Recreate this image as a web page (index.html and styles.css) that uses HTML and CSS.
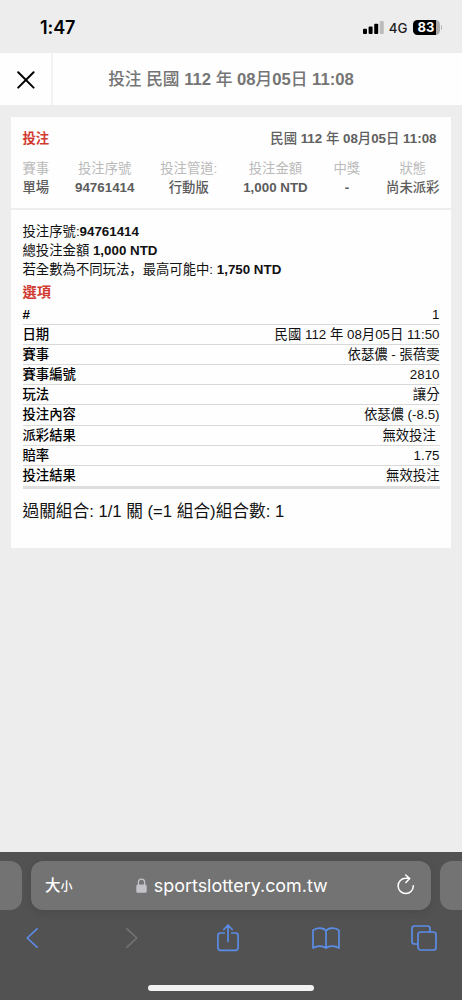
FILE: index.html
```html
<!DOCTYPE html>
<html lang="zh-Hant">
<head>
<meta charset="utf-8">
<title>投注</title>
<link rel="stylesheet" href="styles.css">
</head>
<body>
<div class="status">
  <span class="clock">1:47</span>
  <div class="indicators">
    <svg class="signal" width="21" height="13" viewBox="0 0 21 13"><rect x="0" y="7.8" width="4" height="5.2" rx="1"/><rect x="5.6" y="5.6" width="4" height="7.4" rx="1"/><rect x="11.2" y="2.8" width="4" height="10.2" rx="1"/><rect x="16.8" y="0" width="4" height="13" rx="1" fill="#bcbcbc"/></svg>
    <span class="network">4G</span>
    <div class="battery"><span class="level">83</span></div>
    <span class="cap"></span>
  </div>
</div>
<header class="titlebar">
  <button class="close"><svg width="18" height="18" viewBox="0 0 18 18" fill="none" stroke="#000" stroke-width="2" stroke-linecap="round"><path d="M1.2 1.2 16.6 16.6M16.6 1.2 1.2 16.6"/></svg></button>
  <h1 class="title">投注 民國 <b>112</b> 年 <b>08</b>月<b>05</b>日 <b>11:08</b></h1>
</header>
<main class="content">
  <article class="card">
    <section class="overview">
      <div class="overview-head">
        <span class="red">投注</span>
        <span class="date">民國 <b>112</b> 年 <b>08</b>月<b>05</b>日 <b>11:08</b></span>
      </div>
      <dl class="facts">
        <div><dt>賽事</dt><dd>單場</dd></div>
        <div><dt>投注序號</dt><dd><b>94761414</b></dd></div>
        <div><dt>投注管道:</dt><dd>行動版</dd></div>
        <div><dt>投注金額</dt><dd><b>1,000 NTD</b></dd></div>
        <div><dt>中獎</dt><dd><b>-</b></dd></div>
        <div><dt>狀態</dt><dd>尚未派彩</dd></div>
      </dl>
    </section>
    <section class="details">
      <p class="line">投注序號:<b>94761414</b></p>
      <p class="line">總投注金額 <b>1,000 NTD</b></p>
      <p class="line">若全數為不同玩法<span class="comma" lang="zh-Hans">，</span>最高可能中: <b>1,750 NTD</b></p>
      <h2 class="red options">選項</h2>
      <div class="rows">
        <div class="row"><span class="label"><b>#</b></span><span>1</span></div>
        <div class="row"><span class="label">日期</span><span>民國 112 年 08月05日 11:50</span></div>
        <div class="row"><span class="label">賽事</span><span>依瑟儂 - 張蓓雯</span></div>
        <div class="row"><span class="label">賽事編號</span><span>2810</span></div>
        <div class="row"><span class="label">玩法</span><span>讓分</span></div>
        <div class="row"><span class="label">投注內容</span><span>依瑟儂 (-8.5)</span></div>
        <div class="row"><span class="label">派彩結果</span><span>無效投注&nbsp;</span></div>
        <div class="row"><span class="label">賠率</span><span>1.75</span></div>
        <div class="row"><span class="label">投注結果</span><span>無效投注</span></div>
      </div>
      <p class="combo">過關組合: 1/1 關 (=1 組合)組合數: 1</p>
    </section>
  </article>
</main>
<footer class="browser">
  <div class="tabs">
    <div class="side left"></div>
    <div class="address">
      <span class="aa">大<small>小</small></span>
      <span class="url"><svg width="11" height="15" viewBox="0 0 11 15"><path d="M2.4 7V4.2a3.1 3.1 0 0 1 6.2 0V7" fill="none" stroke="#c3c2c9" stroke-width="1.3"/><rect x=".3" y="6.4" width="10.4" height="8.3" rx="1.5" fill="#c3c2c9"/></svg>sportslottery.com.tw</span>
      <svg class="reload" width="18" height="21" viewBox="0 0 18 21" fill="none" stroke="#fff" stroke-width="1.5" stroke-linecap="round" stroke-linejoin="round"><path d="M16.3 11.7A7.6 7.6 0 1 1 8.7 4.3Q10.6 4.1 12.6 4.5M8.7 1l4 3.5-3.8 4"/></svg>
    </div>
    <div class="side right"></div>
  </div>
  <nav class="tools">
    <svg width="28" height="20" viewBox="0 0 12 20"><path d="M11 .8 1.2 10 11 19.2"/></svg>
    <svg class="off" width="28" height="20" viewBox="-2 0 12 20"><path d="M1 .8 10.8 10 1 19.2"/></svg>
    <svg width="28" height="28" viewBox="0 0 22 28"><path d="M7.2 9H3.5Q.9 9 .9 11.6v12Q.9 26.4 3.5 26.4h15q2.6 0 2.6-2.8v-12Q21.1 9 18.5 9h-3.7M11 17.5V1.5M6.8 5.5 11 1.2l4.2 4.3"/></svg>
    <svg width="28" height="22" viewBox="0 0 28 22"><path d="M14 3.8C11.6.5 4.5.1 1 3.4V21c3.8-2.5 10-2.5 13 0 3-2.5 9.2-2.5 13 0V3.4C23.5.1 16.4.5 14 3.8ZM14 3.8V21"/></svg>
    <svg width="28" height="26" viewBox="0 0 26 26"><rect x="7" y="7" width="18" height="18" rx="2.6"/><path d="M7 19H3.6Q1 19 1 16.4V3.6Q1 1 3.6 1h12.8Q19 1 19 3.6V7"/></svg>
  </nav>
  <div class="home"></div>
</footer>
</body>
</html>
```

FILE: styles.css
```css
* { box-sizing: border-box; }
body {
  margin: 0;
  height: 1000px;
  display: flex;
  flex-direction: column;
  overflow: hidden;
  background: #ededed;
  color: #111;
  font: 13.35px/19px "Liberation Sans", "Noto Sans CJK TC", sans-serif;
}
h1, h2, p, dl, dd, dt { margin: 0; }
.status {
  height: 53px;
  padding: 2px 20px 0 40px;
  display: flex;
  align-items: center;
  justify-content: space-between;
}
.clock { font: 600 18px Inter, sans-serif; color: #000; letter-spacing: -.1px; }
.indicators { display: flex; align-items: center; }
.network { font: 500 13.3px Inter, sans-serif; margin: 0 5px 0 5px; color: #222; }
.battery {
  width: 27px;
  height: 15px;
  border-radius: 4.5px;
  background: linear-gradient(90deg, #000 23px, #ababab 23px);
  display: flex;
  justify-content: center;
}
.level { font: 700 13px/15px Inter, sans-serif; color: #fff; }
.cap { width: 1.5px; height: 5px; margin-left: 1px; border-radius: 0 2px 2px 0; background: #b5b5b5; }
.titlebar { height: 52px; display: flex; background: #fefefe; }
.close {
  width: 53px;
  padding: 1px 0 0;
  border: 0;
  border-right: 2px solid #f2f2f2;
  background: none;
  display: flex;
  align-items: center;
  justify-content: center;
}
.title {
  flex: 1;
  padding-right: 53px;
  text-align: center;
  font-size: 16.68px;
  font-weight: 500;
  line-height: 54px;
  color: #757575;
}
.content { flex: 1; padding: 12px 11px; }
.card { height: 431px; background: #fefefe; }
.overview { height: 93px; padding: 12px 11.5px 0; border-bottom: 2px solid #eee; }
.overview-head { display: flex; justify-content: space-between; padding-right: 3px; }
.red { color: #d13a31; font-weight: 700; }
.date { font-size: 13.35px; font-weight: 500; color: #606060; }
.facts { display: flex; justify-content: space-between; margin-top: 11px; text-align: center; }
dt { color: #bababa; }
dd { color: #5c5c5c; font-weight: 500; }
.details { padding: 12px 11.5px 0; }
.comma { font-family: "Noto Sans CJK SC", sans-serif; line-height: 1; }
.options { font-size: 14.2px; line-height: 26px; }
.rows { border-bottom: 3px solid #dedede; }
.row {
  height: 20.1px;
  display: flex;
  justify-content: space-between;
  border-bottom: 1px solid #d9d9d9;
  line-height: 20px;
}
.row:last-child { border-bottom: 0; }
.label { font-weight: 500; color: #000; }
.combo { margin-top: 10px; font-size: 16.68px; line-height: 25px; }
.browser { height: 148px; padding-top: 9px; background: #525252; }
.tabs { display: flex; gap: 9px; height: 49px; }
.side { width: 22px; background: #737373; }
.side.left { border-radius: 0 12px 12px 0; }
.side.right { border-radius: 12px 0 0 12px; }
.address {
  flex: 1;
  display: flex;
  align-items: center;
  justify-content: space-between;
  padding: 0 16px 0 14px;
  border-radius: 12px;
  background: #737373;
  color: #fff;
  box-shadow: 0 2px 7px #4a4a4a;
}
.aa { font: 500 15.5px "Noto Sans CJK TC", sans-serif; padding-bottom: 3px; }
.aa small { font-size: 12px; }
.url {
  display: flex;
  align-items: center;
  gap: 7px;
  margin-right: 6px;
  font: 17.9px Inter, sans-serif;
}
.reload { margin-bottom: 2px; }
.tools {
  height: 56px;
  padding: 0 24px 0 18px;
  display: flex;
  align-items: center;
  justify-content: space-between;
  fill: none;
  stroke: #5b8ce6;
  stroke-width: 1.7;
  stroke-linecap: round;
  stroke-linejoin: round;
}
.off { stroke: #737373; }
.home { width: 166px; height: 6px; margin: 19px auto 0; border-radius: 3px; background: #f2f2f2; }
```
